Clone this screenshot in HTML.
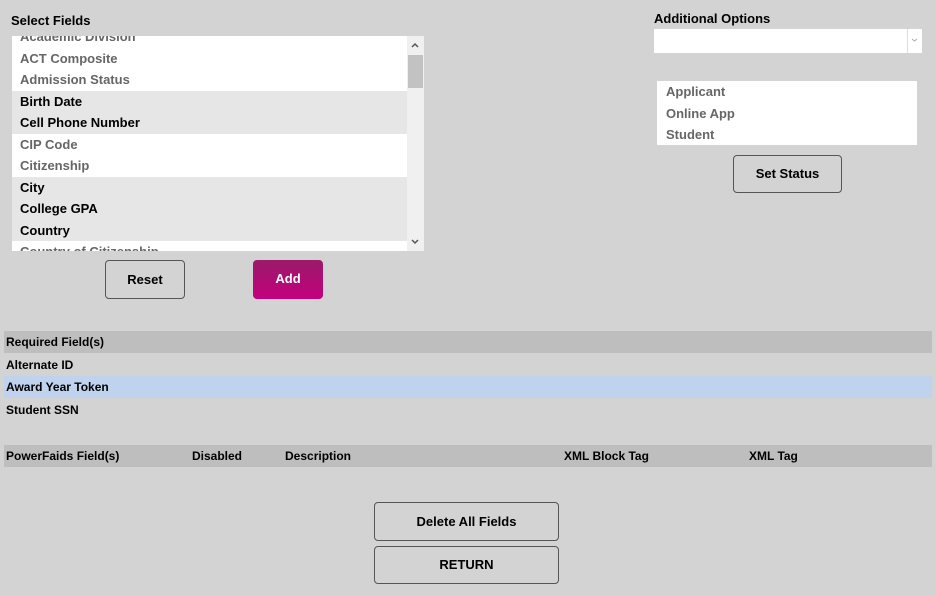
<!DOCTYPE html>
<html><head><style>
body{margin:0;width:936px;height:596px;background:#d3d3d3;font-family:"Liberation Sans",Arial,sans-serif;font-weight:bold;position:relative;overflow:hidden;font-size:13px;color:#000}
.a{position:absolute}
.lbl{font-size:13px}
.list{position:absolute;left:12px;top:36px;width:412px;height:215px;background:#fff;overflow:hidden}
.row{position:absolute;left:0;width:395px;height:21.5px;line-height:21.5px;padding-left:8px;box-sizing:border-box}
.g{color:#666}.k{color:#000;background:#e6e6e6}
.btn{position:absolute;border:1px solid #555;border-radius:4px;box-sizing:border-box;text-align:center;font-size:13px}
.tr{position:absolute;left:4px;width:928px;height:22px;line-height:22px;font-size:12px;padding-left:2px;box-sizing:border-box}
</style></head><body>
<div class="a lbl" style="left:11px;top:13px">Select Fields</div>
<div class="list">
<div class="row g" style="top:-10px">Academic Division</div>
<div class="row g" style="top:11.5px">ACT Composite</div>
<div class="row g" style="top:33px">Admission Status</div>
<div class="row k" style="top:54.5px">Birth Date</div>
<div class="row k" style="top:76px">Cell Phone Number</div>
<div class="row g" style="top:97.5px">CIP Code</div>
<div class="row g" style="top:119px">Citizenship</div>
<div class="row k" style="top:140.5px">City</div>
<div class="row k" style="top:162px">College GPA</div>
<div class="row k" style="top:183.5px">Country</div>
<div class="row g" style="top:205px">Country of Citizenship</div>
<div class="a" style="left:395px;top:0;width:17px;height:215px;background:#f0f0f0"></div>
<div class="a" style="left:396px;top:19px;width:15px;height:33px;background:#c2c2c2"></div>
<svg class="a" style="left:398px;top:5px" width="10" height="8"><path d="M2 6L5 3L8 6" stroke="#555" stroke-width="1.5" fill="none"/></svg>
<svg class="a" style="left:398px;top:202px" width="10" height="8"><path d="M2 2L5 5L8 2" stroke="#555" stroke-width="1.5" fill="none"/></svg>
</div>
<div class="btn" style="left:105px;top:260px;width:80px;height:39px;line-height:37px">Reset</div>
<div class="btn" style="left:253px;top:260px;width:70px;height:39px;line-height:37px;border:none;background:linear-gradient(#9a1a6a,#c4007e);color:#fff">Add</div>

<div class="a lbl" style="left:654px;top:11px">Additional Options</div>
<div class="a" style="left:654px;top:29px;width:268px;height:24px;background:#fff"></div>
<div class="a" style="left:907px;top:29px;width:1px;height:24px;background:#ddd"></div>
<svg class="a" style="left:910px;top:37px" width="9" height="6"><path d="M2 2L4.5 4L7 2" stroke="#aaa" stroke-width="1" fill="none"/></svg>
<div class="a" style="left:657px;top:81px;width:260px;height:64px;background:#fff;color:#666">
<div class="a" style="left:9px;top:3px">Applicant</div>
<div class="a" style="left:9px;top:25px">Online App</div>
<div class="a" style="left:9px;top:46px">Student</div>
</div>
<div class="btn" style="left:733px;top:155px;width:109px;height:38px;line-height:36px">Set Status</div>

<div class="tr" style="top:331px;background:#bebebe">Required Field(s)</div>
<div class="tr" style="top:354px">Alternate ID</div>
<div class="tr" style="top:376px;background:#bfd3ee">Award Year Token</div>
<div class="tr" style="top:399px">Student SSN</div>
<div class="tr" style="top:445px;background:#bebebe">PowerFaids Field(s)
<span class="a" style="left:188px">Disabled</span>
<span class="a" style="left:281px">Description</span>
<span class="a" style="left:560px">XML Block Tag</span>
<span class="a" style="left:745px">XML Tag</span></div>

<div class="btn" style="left:374px;top:502px;width:185px;height:39px;line-height:37px">Delete All Fields</div>
<div class="btn" style="left:374px;top:546px;width:185px;height:38px;line-height:36px">RETURN</div>
</body></html>
